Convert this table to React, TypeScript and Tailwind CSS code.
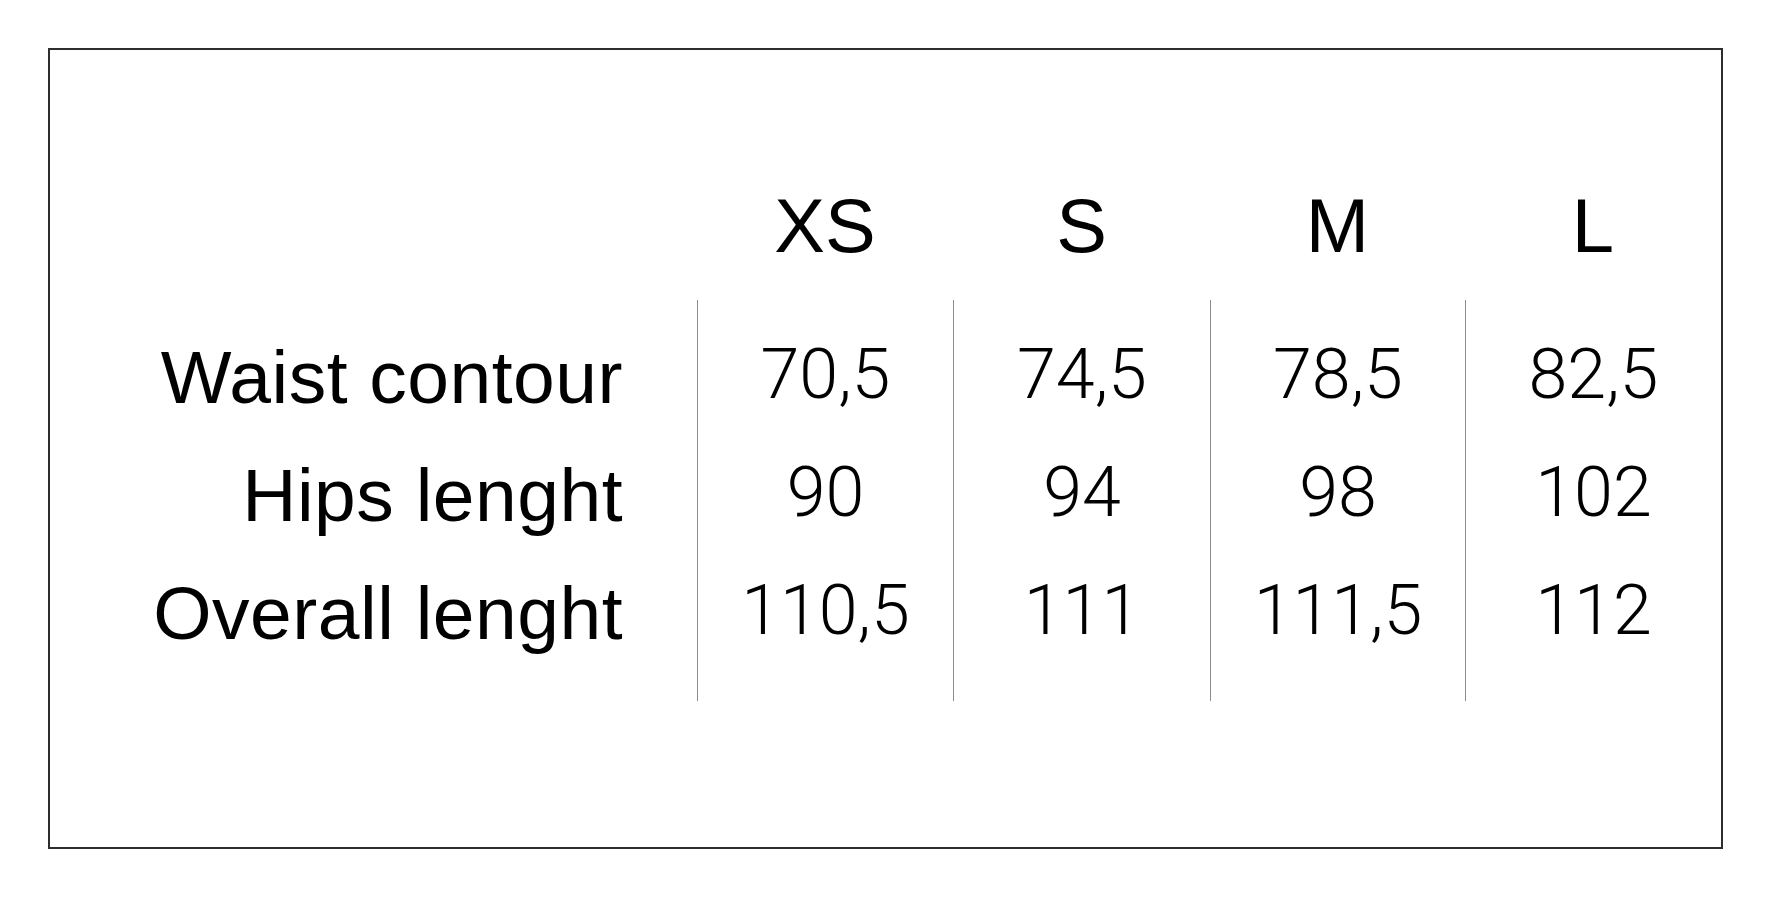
import React from 'react';

const sizes = ['XS', 'S', 'M', 'L'];

const rows = [
  { label: 'Waist contour', values: ['70,5', '74,5', '78,5', '82,5'] },
  { label: 'Hips lenght', values: ['90', '94', '98', '102'] },
  { label: 'Overall lenght', values: ['110,5', '111', '111,5', '112'] },
];

export default function App() {
  return (
    <div className="w-[1772px] h-[898px] bg-white pt-[48px] pl-[48px] text-black font-['Liberation_Sans',Arial,sans-serif]">
      <div className="w-[1675px] h-[801px] border-2 border-[#2e2e2e]">
        {/* size header */}
        <div className="grid grid-cols-[647px_256px_257px_255px_1fr] h-[250px] items-end pb-[15px]">
          <div />
          {sizes.map((s) => (
            <div key={s} className="text-center text-[76px] leading-[118px]">
              {s}
            </div>
          ))}
        </div>

        {/* table body */}
        <div className="grid grid-cols-[647px_256px_257px_255px_1fr]">
          <div className="flex flex-col items-end pt-[18px] pr-[74px]">
            {rows.map((r) => (
              <div key={r.label} className="text-[75px] leading-[118px] whitespace-nowrap tracking-[0.5px]">
                {r.label}
              </div>
            ))}
          </div>
          {sizes.map((s, i) => (
            <div key={s} className="h-[401px] border-l border-[#8c8c8c] flex flex-col items-center pt-[15px]">
              {rows.map((r) => (
                <div
                  key={r.label}
                  className="text-[70px] leading-[118px] font-light font-['Roboto',sans-serif] whitespace-nowrap"
                >
                  {r.values[i]}
                </div>
              ))}
            </div>
          ))}
        </div>
      </div>
    </div>
  );
}
